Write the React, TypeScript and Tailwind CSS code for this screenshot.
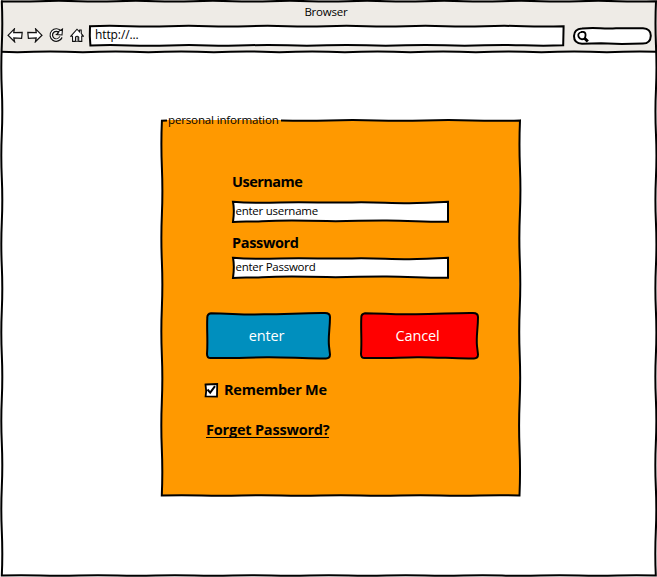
import React from "react";

type Outline = { w: number; h: number; d: string; fill?: string; stroke?: number };

/** Hand-drawn outline stretched behind the content of its parent. */
function Sketch({ w, h, d, fill = "none", stroke = 2 }: Outline) {
  return (
    <svg
      className="pointer-events-none absolute left-0 top-0 overflow-visible"
      width={w}
      height={h}
      viewBox={`0 0 ${w} ${h}`}
      aria-hidden="true"
    >
      <path d={d} fill={fill} stroke="#000" strokeWidth={stroke} strokeLinejoin="miter" />
    </svg>
  );
}

/** A pencil line that sways gently to either side of the straight one. */
function wave(x1: number, y1: number, x2: number, y2: number, step = 38, amp = 0.6, sign = 1) {
  const len = Math.hypot(x2 - x1, y2 - y1);
  const n = Math.max(2, Math.round(len / step));
  const dx = (x2 - x1) / n;
  const dy = (y2 - y1) / n;
  const nx = -(y2 - y1) / len;
  const ny = (x2 - x1) / len;
  let d = "";
  for (let i = 0; i < n; i++) {
    const a = (i % 2 ? -1 : 1) * amp * 2 * sign;
    const cx = x1 + dx * (i + 0.5) + nx * a;
    const cy = y1 + dy * (i + 0.5) + ny * a;
    d += ` Q${cx.toFixed(2)} ${cy.toFixed(2)} ${(x1 + dx * (i + 1)).toFixed(2)} ${(y1 + dy * (i + 1)).toFixed(2)}`;
  }
  return d;
}

const FIELD =
  "M1 .8 C15 2.1 30 2.1 48 1.5 C75 .8 95 2 120 1.4 C145 .8 160 2.6 185 2.1 C200 1.8 208 .9 216 .7 L216 20.7 C195 21 180 19.7 155 19.5 C130 19.3 120 20.5 95 20.1 C70 19.4 50 19.2 30 20.2 C18 20.7 8 20.4 1 20.9 C2 14 2.6 9 1 .8Z";

function Field({ value }: { value: string }) {
  return (
    <div className="relative h-[22px] w-[217px]">
      <Sketch w={217} h={22} d={FIELD} fill="#fff" />
      <span className="relative block whitespace-nowrap pl-[3.5px] text-[11.5px] leading-[20px] tracking-[-0.26px]">{value}</span>
    </div>
  );
}

const ENTER =
  "M5 1.3 C25 1.3 35 3 58 2.3 C82 2.1 98 .9 119 1.1 Q124 1.1 124 5 C124 17 122 24 123 34 L124 42.5 Q124 46.4 120 46.4 C99 46.9 83 45 61 45.2 C41 45.4 27 46.4 5 46 Q1 46.4 1 42 C2 29 .7 17 1.3 6 Q1 2 5 1.3Z";
const CANCEL =
  "M5 1.3 C24 1.3 34 3 56 2.2 C78 2.2 94 .9 113 1.1 Q118 1.1 118 5 C118 17 116 24 117 34 L118 42.5 Q118 46.4 114 46.4 C95 46.9 79 45 57 45.2 C39 45.4 25 46.4 5 46 Q1 46.4 1 42 C2 29 .7 17 1.3 6 Q1 2 5 1.3Z";

function Arrow({ flip = false }: { flip?: boolean }) {
  return (
    <svg width="16" height="15" viewBox="0 0 16 15" className={flip ? "-scale-x-100" : ""}>
      <path d="M1 7.3 L7.4 .9 L6.7 4.7 L15.2 4.4 L14.6 10.3 L6.8 9.9 L7.6 13.8Z" fill="#fff" stroke="#111" strokeWidth="1.2" />
    </svg>
  );
}

function Reload() {
  return (
    <svg width="15" height="15" viewBox="0 0 15 15" fill="none">
      <path d="M11.3 4.1 A5 5 0 1 0 12 9" stroke="#111" strokeWidth="3.6" />
      <path d="M11.4 4.2 A5 5 0 1 0 11.9 8.8" stroke="#fff" strokeWidth="1.3" />
      <path d="M13.5 1 L13 7 L7.5 6.5 L9.6 4.8 L8.7 4Z" fill="#fff" stroke="#111" strokeWidth="1.1" />
    </svg>
  );
}

function Home() {
  return (
    <svg width="14" height="15" viewBox="0 0 14 15" stroke="#111" strokeWidth="1.1" fill="#fff">
      <path d="M2.5 8.3 H.7 L7 1.2 L9.5 3.8 L9.7 2 H11.2 L11.3 5.5 L13.3 8.1 H11.7 L11.8 13.4 H2.6Z" />
      <path d="M5.5 13.3 V9.2 Q7 7.2 8.7 9.2 V13.3" />
      <path d="M7.2 9 V13" strokeWidth=".7" />
    </svg>
  );
}

function Toolbar() {
  return (
    <div className="flex h-[23px] items-start pl-[7px]">
      <nav className="flex h-[21px] w-[82px] items-center">
        <Arrow />
        <div className="ml-1 flex"><Arrow flip /></div>
        <div className="ml-[6px]"><Reload /></div>
        <div className="ml-[6px]"><Home /></div>
      </nav>
      <div className="relative h-[22px] w-[475px]">
        <Sketch
          w={475}
          h={22}
          fill="#fff"
          d={`M1 1.2${wave(1, 1.2, 474.6, 1.2, 38, 0.35, -1)} L474.2 20.3${wave(474.2, 20.3, 1.4, 20.4, 40, 0.4, -1)} L.8 11Z`}
        />
        <span className="relative block pl-[6px] text-[12px] leading-[20px] tracking-[-0.1px]">http://...</span>
      </div>
      <div className="relative ml-[9px] mt-[2px] h-[18px] w-[79px]">
        <Sketch
          w={79}
          h={18}
          fill="#fff"
          d="M9 1.5 C22 .2 30 2 43 1.2 L70 1.3 Q77.8 1.8 77.8 8.8 Q77.5 16.5 70 16.6 L49 16.9 L28 16.2 L9 16.7 Q1 16.5 1 9 Q1.2 2 9 1.5Z"
        />
        <svg className="relative ml-1 mt-1" width="13" height="13" viewBox="0 0 13 13" fill="none" stroke="#000">
          <path d="M7.8 7.2 Q4 9.8 1.7 6 Q.2 2.2 4.4 1 Q9 .2 8.5 4.6 Q8.3 6.2 7.8 7.2Z" strokeWidth="1.8" />
          <path d="M7.3 7 L10.8 10.5" strokeWidth="3" />
        </svg>
      </div>
    </div>
  );
}

export default function App() {
  return (
    <div className="relative flex h-[577px] w-[657px] flex-col overflow-hidden bg-white font-['Open_Sans','Noto_Sans',sans-serif] text-black">
      <header className="relative h-[52px] bg-[#eeebe6]">
        <h1 className="h-[25px] pr-[5px] pt-px text-center text-[11.5px] leading-[22px] tracking-[-0.2px]">Browser</h1>
        <Toolbar />
        <Sketch w={657} h={52} d={`M1 51.8${wave(1, 51.8, 656, 51.8, 32, 0.35)}`} />
      </header>

      <main className="flex flex-1 pl-[161px] pt-[67px]">
        <section className="relative h-[378px] w-[360px]">
          <Sketch
            w={360}
            h={378}
            stroke={0}
            fill="#ff9900"
            d="M1 1 H359 L358 376 H1Z"
          />
          <Sketch
            w={360}
            h={378}
            d={`M120 1.4${wave(120, 1.4, 359, 1.4, 48, 0.35)}${wave(359, 1.4, 358.5, 376.5, 47, 0.5)}${wave(358.5, 376.5, 0.8, 376.5, 38, 0.35)}${wave(0.8, 376.5, 0.9, 1.8, 47, 0.5)} L6 1.4`}
          />
          <div className="relative flex flex-col">
            <div className="h-[53px] whitespace-nowrap pl-[7px] text-[11.5px] leading-[2px] tracking-[-0.14px]">personal information</div>
            <label className="pl-[71px] text-[14.5px] font-bold leading-[20px] tracking-[-0.5px]">Username</label>
            <div className="ml-[71px] mt-[9px]"><Field value="enter username" /></div>
            <label className="mt-[10px] pl-[71px] text-[14.5px] font-bold leading-[20px] tracking-[-0.35px]">Password</label>
            <div className="ml-[71px] mt-[4px]"><Field value="enter Password" /></div>
            <div className="mt-[33px] flex gap-[29px] pl-[45px]">
              <button className="relative h-[48px] w-[125px] text-white">
                <Sketch w={125} h={48} d={ENTER} fill="#008fbe" />
                <span className="relative block pr-1 text-[14.5px] leading-[46px] tracking-[-0.15px]">enter</span>
              </button>
              <button className="relative h-[48px] w-[119px] text-white">
                <Sketch w={119} h={48} d={CANCEL} fill="#ff0000" />
                <span className="relative block pr-1 text-[14.5px] leading-[46px] tracking-[-0.15px]">Cancel</span>
              </button>
            </div>
            <label className="mt-[20px] flex h-[20px] items-center pl-[43px]">
              <svg width="15" height="15" viewBox="0 0 15 15" fill="none" stroke="#000">
                <path d="M1.5 1.5 L13.2 1 L13 13.6 L1.6 13.4 L2.2 8Z" fill="#fff" strokeWidth="1.8" />
                <path d="M3.5 6.5 L6.2 9.6 L11 3.2" strokeWidth="2" />
              </svg>
              <span className="ml-[5px] text-[14.5px] font-bold leading-[20px] tracking-[-0.25px]">Remember Me</span>
            </label>
            <a className="ml-[45px] mt-[21px] h-[17px] self-start whitespace-nowrap border-b border-black text-[14.5px] font-bold leading-[17px] tracking-[-0.2px]">Forget Password?</a>
          </div>
        </section>
      </main>
      <Sketch
        w={657}
        h={577}
        d={`M1 1.2${wave(1, 1.2, 656, 1.2, 38, 0.35)}${wave(656, 1.2, 655.8, 575.5, 43, 0.5)}${wave(655.8, 575.5, 1.8, 575.5, 38, 0.35)}${wave(1.8, 575.5, 1.8, 1.2, 43, 0.5)}Z`}
      />
    </div>
  );
}
